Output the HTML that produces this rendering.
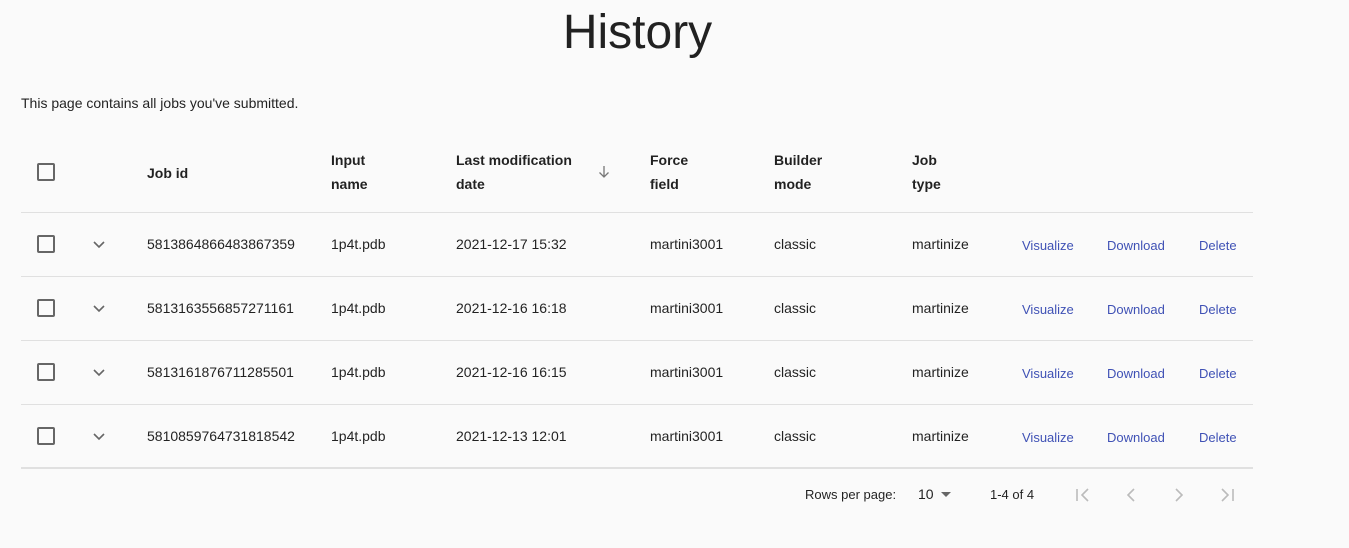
<!DOCTYPE html><html><head><style>
body{margin:0;background:#fafafa;font-family:"Liberation Sans",Arial,sans-serif;color:rgba(0,0,0,.87);width:1349px;height:548px;overflow:hidden;position:relative}
.a{position:absolute;white-space:nowrap}
h1{position:absolute;margin:0;left:0;width:1275px;text-align:center;top:4px;font-weight:300;font-size:48px;line-height:58px}
.cb{position:absolute;width:14px;height:14px;border:2px solid #666;border-radius:2px}
.line{position:absolute;left:21px;width:1232px;height:1px;background:#e0e0e0}
.h{font-size:14px;font-weight:bold;line-height:24px;color:rgba(0,0,0,.87)}
.t{font-size:14px}
.l{font-size:13px;color:#3f51b5}
.g{color:#bbb}
</style></head><body>
<h1>History</h1>
<div class="a t" style="left:21px;top:95px">This page contains all jobs you've submitted.</div>
<div class="cb" style="left:37px;top:163px"></div>
<div class="a h" style="left:147px;top:161px">Job id</div>
<div class="a h" style="left:331px;top:148px">Input<br>name</div>
<div class="a h" style="left:456px;top:148px">Last modification<br>date</div>
<svg class="a" style="left:596px;top:164px" width="16" height="16" viewBox="0 0 16 16"><path d="M8 2v11M3.5 8.5L8 13l4.5-4.5" stroke="#777" stroke-width="1.3" fill="none"/></svg>
<div class="a h" style="left:650px;top:148px">Force<br>field</div>
<div class="a h" style="left:774px;top:148px">Builder<br>mode</div>
<div class="a h" style="left:912px;top:148px">Job<br>type</div>
<div class="line" style="top:212px"></div>
<div id="rows"></div>
<script></script>
<!-- rows -->
<div class="cb" style="left:37px;top:235px"></div><svg class="a" style="left:92px;top:237px" width="14" height="14"><path d="M2 5l5 5 5-5" stroke="#666" stroke-width="1.6" fill="none"/></svg>
<div class="a t" style="left:147px;top:236px">5813864866483867359</div><div class="a t" style="left:331px;top:236px">1p4t.pdb</div><div class="a t" style="left:456px;top:236px">2021-12-17 15:32</div><div class="a t" style="left:650px;top:236px">martini3001</div><div class="a t" style="left:774px;top:236px">classic</div><div class="a t" style="left:912px;top:236px">martinize</div>
<div class="a l" style="left:1022px;top:238px">Visualize</div><div class="a l" style="left:1107px;top:238px">Download</div><div class="a l" style="left:1199px;top:238px">Delete</div>
<div class="line" style="top:276px"></div>
<div class="cb" style="left:37px;top:299px"></div><svg class="a" style="left:92px;top:301px" width="14" height="14"><path d="M2 5l5 5 5-5" stroke="#666" stroke-width="1.6" fill="none"/></svg>
<div class="a t" style="left:147px;top:300px">5813163556857271161</div><div class="a t" style="left:331px;top:300px">1p4t.pdb</div><div class="a t" style="left:456px;top:300px">2021-12-16 16:18</div><div class="a t" style="left:650px;top:300px">martini3001</div><div class="a t" style="left:774px;top:300px">classic</div><div class="a t" style="left:912px;top:300px">martinize</div>
<div class="a l" style="left:1022px;top:302px">Visualize</div><div class="a l" style="left:1107px;top:302px">Download</div><div class="a l" style="left:1199px;top:302px">Delete</div>
<div class="line" style="top:340px"></div>
<div class="cb" style="left:37px;top:363px"></div><svg class="a" style="left:92px;top:365px" width="14" height="14"><path d="M2 5l5 5 5-5" stroke="#666" stroke-width="1.6" fill="none"/></svg>
<div class="a t" style="left:147px;top:364px">5813161876711285501</div><div class="a t" style="left:331px;top:364px">1p4t.pdb</div><div class="a t" style="left:456px;top:364px">2021-12-16 16:15</div><div class="a t" style="left:650px;top:364px">martini3001</div><div class="a t" style="left:774px;top:364px">classic</div><div class="a t" style="left:912px;top:364px">martinize</div>
<div class="a l" style="left:1022px;top:366px">Visualize</div><div class="a l" style="left:1107px;top:366px">Download</div><div class="a l" style="left:1199px;top:366px">Delete</div>
<div class="line" style="top:404px"></div>
<div class="cb" style="left:37px;top:427px"></div><svg class="a" style="left:92px;top:429px" width="14" height="14"><path d="M2 5l5 5 5-5" stroke="#666" stroke-width="1.6" fill="none"/></svg>
<div class="a t" style="left:147px;top:428px">5810859764731818542</div><div class="a t" style="left:331px;top:428px">1p4t.pdb</div><div class="a t" style="left:456px;top:428px">2021-12-13 12:01</div><div class="a t" style="left:650px;top:428px">martini3001</div><div class="a t" style="left:774px;top:428px">classic</div><div class="a t" style="left:912px;top:428px">martinize</div>
<div class="a l" style="left:1022px;top:430px">Visualize</div><div class="a l" style="left:1107px;top:430px">Download</div><div class="a l" style="left:1199px;top:430px">Delete</div>
<div class="line" style="top:467px;height:2px"></div>
<div class="a" style="left:805px;top:487px;font-size:13px">Rows per page:</div>
<div class="a" style="left:918px;top:486px;font-size:14px">10</div>
<svg class="a" style="left:940px;top:490px" width="12" height="8"><path d="M1 2h10L6 7z" fill="#666"/></svg>
<div class="a" style="left:990px;top:487px;font-size:13px">1-4 of 4</div>
<svg class="a" style="left:1074px;top:486px" width="18" height="18"><path d="M3 3v12M14 3L8 9l6 6" stroke="#bbb" stroke-width="1.6" fill="none"/></svg>
<svg class="a" style="left:1122px;top:486px" width="18" height="18"><path d="M12 3L6 9l6 6" stroke="#bbb" stroke-width="1.6" fill="none"/></svg>
<svg class="a" style="left:1170px;top:486px" width="18" height="18"><path d="M6 3l6 6-6 6" stroke="#bbb" stroke-width="1.6" fill="none"/></svg>
<svg class="a" style="left:1218px;top:486px" width="18" height="18"><path d="M15 3v12M4 3l6 6-6 6" stroke="#bbb" stroke-width="1.6" fill="none"/></svg>
</body></html>
